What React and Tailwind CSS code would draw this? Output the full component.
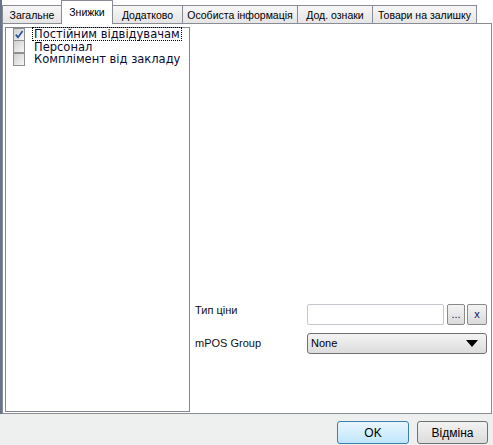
import React from 'react';

const TABS = [
  { label: 'Загальне', w: 'w-[60px]' },
  { label: 'Знижки', w: 'w-[52px]', active: true },
  { label: 'Додатково', w: 'w-[71px]' },
  { label: 'Особиста інформація', w: 'w-[116px]' },
  { label: 'Дод. ознаки', w: 'w-[76px]' },
  { label: 'Товари на залишку', w: 'w-[105px]' },
];

const DISCOUNTS = [
  { label: 'Постійним відвідувачам', checked: true, focused: true },
  { label: 'Персонал' },
  { label: 'Комплімент від закладу' },
];

const TAB_FONT = { fontFamily: '"Liberation Sans", Arial, sans-serif' };
const UI_FONT = { fontFamily: '"DejaVu Sans", Verdana, sans-serif' };

function Tab({ label, w, active }) {
  if (active) {
    return (
      <div
        style={TAB_FONT}
        className={`${w} relative z-10 -ml-px -mb-px h-[24px] shrink-0 whitespace-nowrap border border-b-0 border-[#898c95] bg-white pt-[5px] text-center text-[10.5px] leading-[13px] text-black`}
      >
        {label}
      </div>
    );
  }
  return (
    <div
      style={TAB_FONT}
      className={`${w} -ml-px first:ml-0 h-[18px] shrink-0 whitespace-nowrap border border-b-0 border-[#898c95] bg-gradient-to-b from-[#f7f7f7] to-[#e5e5e5] pt-[3px] text-center text-[10.5px] leading-[13px] text-black`}
    >
      {label}
    </div>
  );
}

function CheckBox({ checked }) {
  return (
    <div className="relative h-[13px] w-[12px] shrink-0 border border-[#8e8f8f] bg-gradient-to-br from-[#cfcfcf] to-[#f6f6f6]">
      <div className="absolute inset-[2px] bg-gradient-to-br from-[#d6d6d6] to-[#f0f0f0]" />
      {checked && (
        <svg viewBox="0 0 10 11" className="absolute left-[0px] top-[0px] h-[11px] w-[10px]">
          <path d="M1.8 5.6 L4 8.4 L8.6 2" fill="none" stroke="#2b4ea6" strokeWidth="1.7" />
        </svg>
      )}
    </div>
  );
}

function SmallButton({ children }) {
  return (
    <div
      style={TAB_FONT}
      className="flex h-[21px] items-center justify-center rounded-[2px] border border-[#8a8a8a] bg-gradient-to-b from-[#f4f4f4] to-[#dadada] text-[11px] leading-none text-[#101060]"
    >
      {children}
    </div>
  );
}

export default function App() {
  return (
    <div className="flex h-[445px] w-[493px] flex-col bg-white" style={UI_FONT}>
      <div className="flex h-[414px] flex-col border-l-2 border-[#66758a]">
        {/* tab strip */}
        <div className="flex h-[23px] shrink-0 items-end">
          {TABS.map((t) => (
            <Tab key={t.label} {...t} />
          ))}
        </div>

        {/* tab page */}
        <div className="flex min-h-0 flex-1 mr-[1px] border border-[#898c95] bg-white">
          {/* discount list */}
          <div className="ml-[2px] mt-[3px] mb-px w-[185px] shrink-0 border border-[#828790] bg-white pl-[7px]">
            {DISCOUNTS.map((d) => (
              <div key={d.label} className="flex h-[12.5px] items-center gap-[9px]">
                <CheckBox checked={d.checked} />
                <span
                  className={`whitespace-nowrap text-[11.5px] leading-[12px] text-[#0a0a30] ${
                    d.focused ? 'outline outline-1 outline-dotted outline-black -ml-[1px] pl-[1px] pr-[1px]' : ''
                  }`}
                >
                  {d.label}
                </span>
              </div>
            ))}
          </div>

          {/* price settings */}
          <div className="flex flex-1 flex-col justify-end pb-[59px] pl-[5px]" style={TAB_FONT}>
            <div className="flex h-[21px] items-center">
              <div className="w-[112px] shrink-0 -mt-[8px] text-[11px] text-[#101010]">Тип ціни</div>
              <div className="h-[21px] w-[137px] shrink-0 rounded-[2px] border border-[#c5c9cf] bg-white" />
              <div className="ml-[3px] w-[18px] shrink-0">
                <SmallButton>...</SmallButton>
              </div>
              <div className="ml-[2px] w-[20px] shrink-0">
                <SmallButton>x</SmallButton>
              </div>
            </div>
            <div className="mt-[8px] flex h-[21px] items-center">
              <div className="w-[112px] shrink-0 text-[11px] text-[#101010]">mPOS Group</div>
              <div className="flex h-[21px] w-[180px] shrink-0 items-center justify-between rounded-[3px] border border-[#707070] bg-gradient-to-b from-[#f4f4f4] to-[#dcdcdc] pl-[3px] pr-[8px] text-[11px] text-black">
                <span>None</span>
                <svg viewBox="0 0 12 7" className="h-[7px] w-[12px]">
                  <path d="M0 0 H12 L6 7 Z" fill="#000" />
                </svg>
              </div>
            </div>
          </div>
        </div>
      </div>

      {/* dialog buttons */}
      <div className="flex flex-1 items-start justify-end gap-[8px] bg-[#eef0ef] pr-[5px] pt-[7px]" style={TAB_FONT}>
        <button className="flex h-[23px] w-[72px] items-center justify-center rounded-[3px] border border-[#3c7fb1] bg-gradient-to-b from-[#eaf6fd] to-[#bee6fd] text-[12px] text-black">
          OK
        </button>
        <button className="flex h-[23px] w-[71px] items-center justify-center rounded-[3px] border border-[#707070] bg-gradient-to-b from-[#f2f2f2] to-[#dcdcdc] text-[12px] text-black">
          Відміна
        </button>
      </div>
    </div>
  );
}
